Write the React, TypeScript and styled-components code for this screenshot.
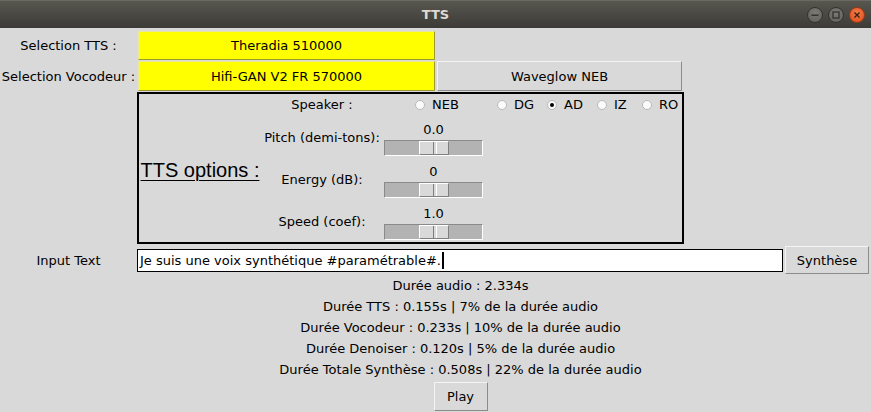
import React from "react";
import styled, { createGlobalStyle } from "styled-components";

const GlobalStyle = createGlobalStyle`
  html, body { margin: 0; padding: 0; background: #d9d9d9; }
  body { font-family: "DejaVu Sans", sans-serif; font-size: 13px; color: #000; }
  * { box-sizing: border-box; }
`;

const Window = styled.div`
  width: 871px;
  height: 412px;
  display: flex;
  flex-direction: column;
  background: #d9d9d9;
  overflow: hidden;
`;

const TitleBar = styled.div`
  height: 28px;
  flex: none;
  display: grid;
  grid-template-columns: 1fr auto 1fr;
  align-items: center;
  background: linear-gradient(#58564f, #3c3b37);
  border-top: 1px solid #6b6963;
`;

const Title = styled.div`
  grid-column: 2;
  font-weight: bold;
  font-size: 13px;
  color: #dfdbd2;
`;

const WinButtons = styled.div`
  grid-column: 3;
  justify-self: end;
  display: flex;
  gap: 5px;
  padding-right: 6px;
`;

const WinButton = styled.div<{ $close?: boolean }>`
  width: 16px;
  height: 16px;
  border-radius: 50%;
  display: flex;
  align-items: center;
  justify-content: center;
  background: ${(p) =>
    p.$close
      ? "radial-gradient(circle at 50% 35%, #f37c4a, #de4a15)"
      : "radial-gradient(circle at 50% 35%, #7c7b75, #5d5c57)"};
  border: 1px solid ${(p) => (p.$close ? "#9e3a12" : "#34332f")};
`;

const Body = styled.div`
  flex: 1;
  display: flex;
  flex-direction: column;
  padding-top: 3px;
`;

const Row = styled.div<{ $h: number; $mt?: number }>`
  display: flex;
  align-items: center;
  height: ${(p) => p.$h}px;
  margin-top: ${(p) => p.$mt ?? 0}px;
`;

const RowLabel = styled.div`
  width: 137px;
  flex: none;
  text-align: center;
  white-space: nowrap;
`;

const Choice = styled.div<{ $selected?: boolean; $w: number; $ml: number }>`
  width: ${(p) => p.$w}px;
  margin-left: ${(p) => p.$ml}px;
  height: 100%;
  display: flex;
  align-items: center;
  justify-content: center;
  background: ${(p) => (p.$selected ? "#ffff00" : "#d9d9d9")};
  border: 1px solid;
  border-color: ${(p) =>
    p.$selected ? "#e8e8a0 #9a9a30 #9a9a30 #e8e8a0" : "#f4f4f4 #8c8c8c #8c8c8c #f4f4f4"};
`;

const OptionsFrame = styled.div`
  margin-left: 137px;
  margin-top: 1px;
  width: 547px;
  height: 152px;
  flex: none;
  border: 2px solid #000;
  display: grid;
  grid-template-columns: 122px 122px 101px 1fr;
  grid-template-rows: 21px 36px 36px 36px;
  row-gap: 6px;
`;

const Heading = styled.div`
  grid-column: 1;
  grid-row: 1 / -1;
  align-self: center;
  justify-self: center;
  padding-top: 5px;
  font-family: "Liberation Sans", Arial, sans-serif;
  font-size: 20px;
  text-decoration: underline;
  text-underline-offset: 3px;
  text-decoration-thickness: 1px;
  white-space: nowrap;
`;

const OptLabel = styled.div<{ $row: number }>`
  grid-column: 2;
  grid-row: ${(p) => p.$row};
  align-self: center;
  justify-self: center;
  white-space: nowrap;
  padding-bottom: ${(p) => (p.$row === 1 ? 0 : 4)}px;
`;

const RadioGroup = styled.div`
  grid-column: 3 / 5;
  grid-row: 1;
  display: grid;
  grid-template-columns: 82px 50px 50px 45px 1fr;
  align-items: center;
  padding-left: 32px;
`;

const RadioItem = styled.div`
  display: flex;
  align-items: center;
  gap: 7px;
  white-space: nowrap;
`;

const RadioDot = styled.span<{ $on?: boolean }>`
  width: 10px;
  height: 10px;
  border-radius: 50%;
  border: 1px solid #b9b9b9;
  background: #fbfbfb;
  display: flex;
  align-items: center;
  justify-content: center;
  &::after {
    content: "";
    width: 4px;
    height: 4px;
    border-radius: 50%;
    background: ${(p) => (p.$on ? "#000" : "transparent")};
  }
`;

const SliderCell = styled.div<{ $row: number }>`
  grid-column: 3;
  grid-row: ${(p) => p.$row};
  display: flex;
  flex-direction: column;
  align-items: center;
`;

const SliderValue = styled.div`
  height: 17px;
  line-height: 17px;
`;

const Track = styled.div`
  position: relative;
  margin-top: 2px;
  width: 99px;
  height: 16px;
  background: #b3b3b3;
  border: 1px solid;
  border-color: #8a8a8a #ffffff #ffffff #8a8a8a;
`;

const Thumb = styled.div`
  position: absolute;
  top: 0;
  bottom: 0;
  width: 30px;
  background: #d9d9d9;
  border: 1px solid;
  border-color: #ffffff #7f7f7f #7f7f7f #ffffff;
  &::after {
    content: "";
    position: absolute;
    top: 0;
    bottom: 0;
    left: 13px;
    width: 2px;
    border-left: 1px solid #7f7f7f;
    border-right: 1px solid #ffffff;
  }
`;

const Entry = styled.div`
  width: 646px;
  height: 23px;
  background: #fff;
  border: 1px solid #000;
  display: flex;
  align-items: center;
  padding-left: 2px;
  white-space: nowrap;
`;

const Caret = styled.span`
  width: 2px;
  height: 17px;
  background: #000;
  margin-left: 1px;
`;

const Button = styled.div<{ $w: number; $h: number; $ml?: number }>`
  width: ${(p) => p.$w}px;
  height: ${(p) => p.$h}px;
  margin-left: ${(p) => p.$ml ?? 0}px;
  flex: none;
  display: flex;
  align-items: center;
  justify-content: center;
  background: #d9d9d9;
  border: 1px solid;
  border-color: #f4f4f4 #8c8c8c #8c8c8c #f4f4f4;
`;

const Results = styled.div`
  margin-left: 137px;
  margin-top: 1px;
  width: 647px;
  display: flex;
  flex-direction: column;
  align-items: center;
`;

const ResultLine = styled.div`
  height: 21px;
  line-height: 21px;
  white-space: nowrap;
`;

const PlayWrap = styled.div`
  margin-top: 2px;
`;

const Slider = ({ row, value, frac }: { row: number; value: string; frac: number }) => (
  <SliderCell $row={row}>
    <SliderValue>{value}</SliderValue>
    <Track>
      <Thumb style={{ left: `${frac * (97 - 30)}px` }} />
    </Track>
  </SliderCell>
);

const speakers = [
  { name: "NEB", on: false },
  { name: "DG", on: false },
  { name: "AD", on: true },
  { name: "IZ", on: false },
  { name: "RO", on: false },
];

const results = [
  "Durée audio : 2.334s",
  "Durée TTS : 0.155s | 7% de la durée audio",
  "Durée Vocodeur : 0.233s | 10% de la durée audio",
  "Durée Denoiser : 0.120s | 5% de la durée audio",
  "Durée Totale Synthèse : 0.508s | 22% de la durée audio",
];

export default function App() {
  return (
    <Window>
      <GlobalStyle />
      <TitleBar>
        <Title>TTS</Title>
        <WinButtons>
          <WinButton>
            <svg width="8" height="8" viewBox="0 0 8 8">
              <rect x="0.5" y="3.5" width="7" height="1.4" fill="#2f2e2a" />
            </svg>
          </WinButton>
          <WinButton>
            <svg width="8" height="8" viewBox="0 0 8 8">
              <rect x="1" y="1" width="6" height="6" fill="none" stroke="#2f2e2a" strokeWidth="1.2" />
            </svg>
          </WinButton>
          <WinButton $close>
            <svg width="8" height="8" viewBox="0 0 8 8">
              <path d="M1.5 1.5 L6.5 6.5 M6.5 1.5 L1.5 6.5" stroke="#3a2014" strokeWidth="1.4" />
            </svg>
          </WinButton>
        </WinButtons>
      </TitleBar>
      <Body>
        <Row $h={29}>
          <RowLabel>Selection TTS :</RowLabel>
          <Choice $selected $w={297} $ml={1}>Theradia 510000</Choice>
        </Row>
        <Row $h={30} $mt={1}>
          <RowLabel>Selection Vocodeur :</RowLabel>
          <Choice $selected $w={297} $ml={1}>Hifi-GAN V2 FR 570000</Choice>
          <Choice $w={245} $ml={2}>Waveglow NEB</Choice>
        </Row>
        <OptionsFrame>
          <Heading>TTS options :</Heading>
          <OptLabel $row={1}>Speaker :</OptLabel>
          <RadioGroup>
            {speakers.map((s) => (
              <RadioItem key={s.name}>
                <RadioDot $on={s.on} />
                {s.name}
              </RadioItem>
            ))}
          </RadioGroup>
          <OptLabel $row={2}>Pitch (demi-tons):</OptLabel>
          <Slider row={2} value="0.0" frac={0.5} />
          <OptLabel $row={3}>Energy (dB):</OptLabel>
          <Slider row={3} value="0" frac={0.5} />
          <OptLabel $row={4}>Speed (coef):</OptLabel>
          <Slider row={4} value="1.0" frac={0.5} />
        </OptionsFrame>
        <Row $h={28} $mt={2}>
          <RowLabel>Input Text</RowLabel>
          <Entry>
            Je suis une voix synthétique #paramétrable#.
            <Caret />
          </Entry>
          <Button $w={84} $h={28} $ml={2}>Synthèse</Button>
        </Row>
        <Results>
          {results.map((r) => (
            <ResultLine key={r}>{r}</ResultLine>
          ))}
          <PlayWrap>
            <Button $w={54} $h={29}>Play</Button>
          </PlayWrap>
        </Results>
      </Body>
    </Window>
  );
}
